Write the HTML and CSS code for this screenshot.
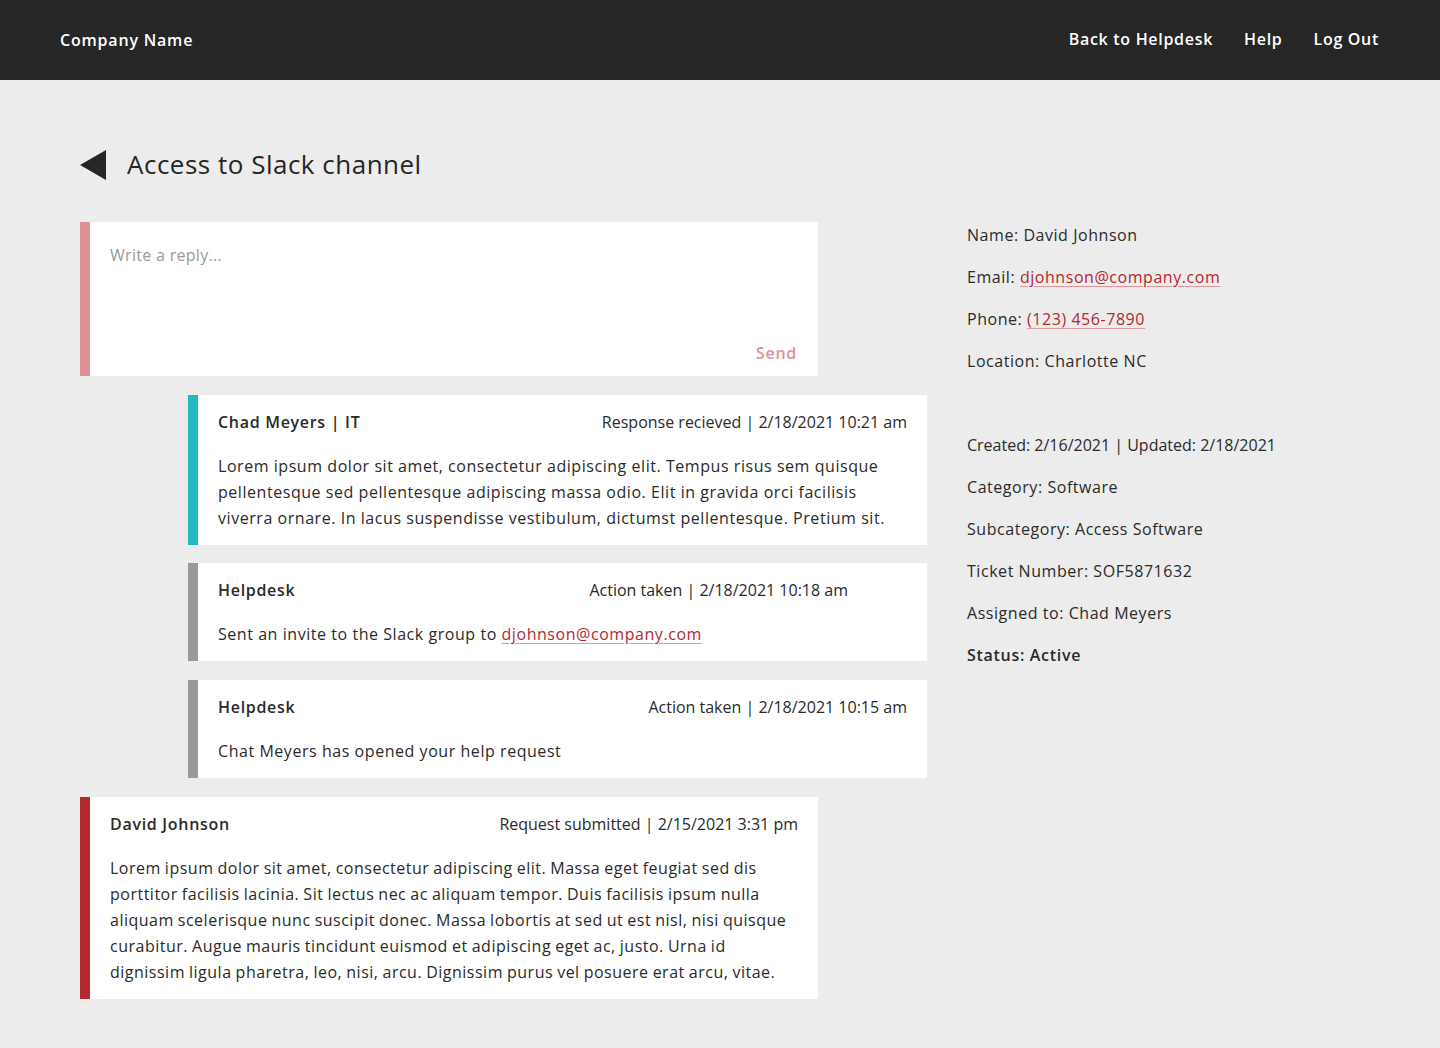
FILE: index.html
```html
<!DOCTYPE html>
<html lang="en">
<head>
<meta charset="utf-8">
<title>Access to Slack channel</title>
<link rel="stylesheet" href="styles.css">
</head>
<body>
<header class="topbar">
  <div class="brand">Company Name</div>
  <nav class="nav">
    <a href="#">Back to Helpdesk</a>
    <a href="#">Help</a>
    <a href="#">Log Out</a>
  </nav>
</header>
<main class="page">
  <div class="title-row">
    <svg class="back" width="26" height="30" viewBox="0 0 26 30"><polygon points="26,0 26,30 0,15" fill="#262626"/></svg>
    <h1 class="title">Access to Slack channel</h1>
  </div>
  <div class="content">
    <section class="thread">
      <div class="reply">
        <div class="reply-input">Write a reply...</div>
        <div class="reply-actions"><span class="send">Send</span></div>
      </div>
      <article class="card card-it indent">
        <div class="card-head"><span class="who">Chad Meyers | IT</span><span class="meta">Response recieved | 2/18/2021 10:21 am</span></div>
        <p class="card-body">Lorem ipsum dolor sit amet, consectetur adipiscing elit. Tempus risus sem quisque pellentesque sed pellentesque adipiscing massa odio. Elit in gravida orci facilisis viverra ornare. In lacus suspendisse vestibulum, dictumst pellentesque. Pretium sit.</p>
      </article>
      <article class="card card-sys indent">
        <div class="card-head"><span class="who">Helpdesk</span><span class="meta meta-offset">Action taken | 2/18/2021 10:18 am</span></div>
        <p class="card-body">Sent an invite to the Slack group to <a href="#" class="link">djohnson@company.com</a></p>
      </article>
      <article class="card card-sys indent">
        <div class="card-head"><span class="who">Helpdesk</span><span class="meta">Action taken | 2/18/2021 10:15 am</span></div>
        <p class="card-body">Chat Meyers has opened your help request</p>
      </article>
      <article class="card card-user">
        <div class="card-head"><span class="who">David Johnson</span><span class="meta">Request submitted | 2/15/2021 3:31 pm</span></div>
        <p class="card-body">Lorem ipsum dolor sit amet, consectetur adipiscing elit. Massa eget feugiat sed dis porttitor facilisis lacinia. Sit lectus nec ac aliquam tempor. Duis facilisis ipsum nulla aliquam scelerisque nunc suscipit donec. Massa lobortis at sed ut est nisl, nisi quisque curabitur. Augue mauris tincidunt euismod et adipiscing eget ac, justo. Urna id dignissim ligula pharetra, leo, nisi, arcu. Dignissim purus vel posuere erat arcu, vitae.</p>
      </article>
    </section>
    <aside class="details">
      <p>Name: David Johnson</p>
      <p>Email: <a href="#" class="link">djohnson@company.com</a></p>
      <p>Phone: <a href="#" class="link">(123) 456-7890</a></p>
      <p class="group-end">Location: Charlotte NC</p>
      <p class="dates">Created: 2/16/2021 | Updated: 2/18/2021</p>
      <p>Category: Software</p>
      <p>Subcategory: Access Software</p>
      <p>Ticket Number: SOF5871632</p>
      <p>Assigned to: Chad Meyers</p>
      <p class="status">Status: Active</p>
    </aside>
  </div>
</main>
</body>
</html>
```

FILE: styles.css
```css
* { box-sizing: border-box; }
html, body { margin: 0; padding: 0; }
body {
  background: #ececec;
  color: #2a2a2a;
  font-family: "Open Sans", "Liberation Sans", sans-serif;
  font-size: 16px;
  letter-spacing: 0.55px;
  min-height: 1048px;
}
.topbar {
  height: 80px;
  background: #262626;
  color: #ffffff;
  display: flex;
  align-items: center;
  justify-content: space-between;
  padding: 0 61px 0 60px;
}
.brand { font-weight: 600; font-size: 16px; letter-spacing: 0.8px; }
.nav { display: flex; gap: 31px; }
.nav a { color: #fff; text-decoration: none; font-weight: 600; font-size: 16px; letter-spacing: 0.7px; position: relative; top: -1px; }
.page { padding: 70px 0 40px 80px; }
.title-row { display: flex; align-items: center; gap: 21px; height: 30px; }
.back { display: block; }
.title { margin: 0; font-size: 26px; font-weight: 500; line-height: 30px; color: #262626; letter-spacing: 0.5px; position: relative; top: -1px; }
.content { display: flex; gap: 40px; margin-top: 42px; align-items: flex-start; }
.thread { width: 847px; display: flex; flex-direction: column; gap: 19px; }
.reply {
  width: 738px;
  background: #fff;
  border-left: 10px solid #dd9195;
  padding: 20px 21px 10px 20px;
  letter-spacing: 0.3px;
}
.reply-input { color: #9a9a9a; line-height: 26px; min-height: 98px; }
.reply-actions { display: flex; justify-content: flex-end; line-height: 26px; }
.send { color: #dd9195; font-weight: 600; letter-spacing: 0.7px; }
.card {
  background: #fff;
  border-left: 10px solid #999;
  padding: 14px 20px;
  width: 738px;
}
.card.indent { margin-left: 108px; width: 739px; }
.card-it { border-left-color: #22b9c0; margin-bottom: -1px; }
.card-sys { border-left-color: #999999; }
.card-user { border-left-color: #b4282f; }
.card-head { display: flex; justify-content: space-between; line-height: 26px; margin-bottom: 18px; }
.who { font-weight: 600; letter-spacing: 0.7px; }
.meta { letter-spacing: 0; }
.meta-offset { margin-right: 59px; }
.card-body { margin: 0; line-height: 26px; }
.card-user .card-body { letter-spacing: 0.5px; word-spacing: -0.6px; }
.link { color: #b4282f; text-decoration: underline; text-decoration-color: #dc9a9d; text-underline-offset: 3px; }
.details p { margin: 0 0 16px; line-height: 26px; }
.details .group-end { margin-bottom: 58px; }
.details .dates { letter-spacing: 0; }
.details .status { font-weight: 600; letter-spacing: 0.7px; }
```
